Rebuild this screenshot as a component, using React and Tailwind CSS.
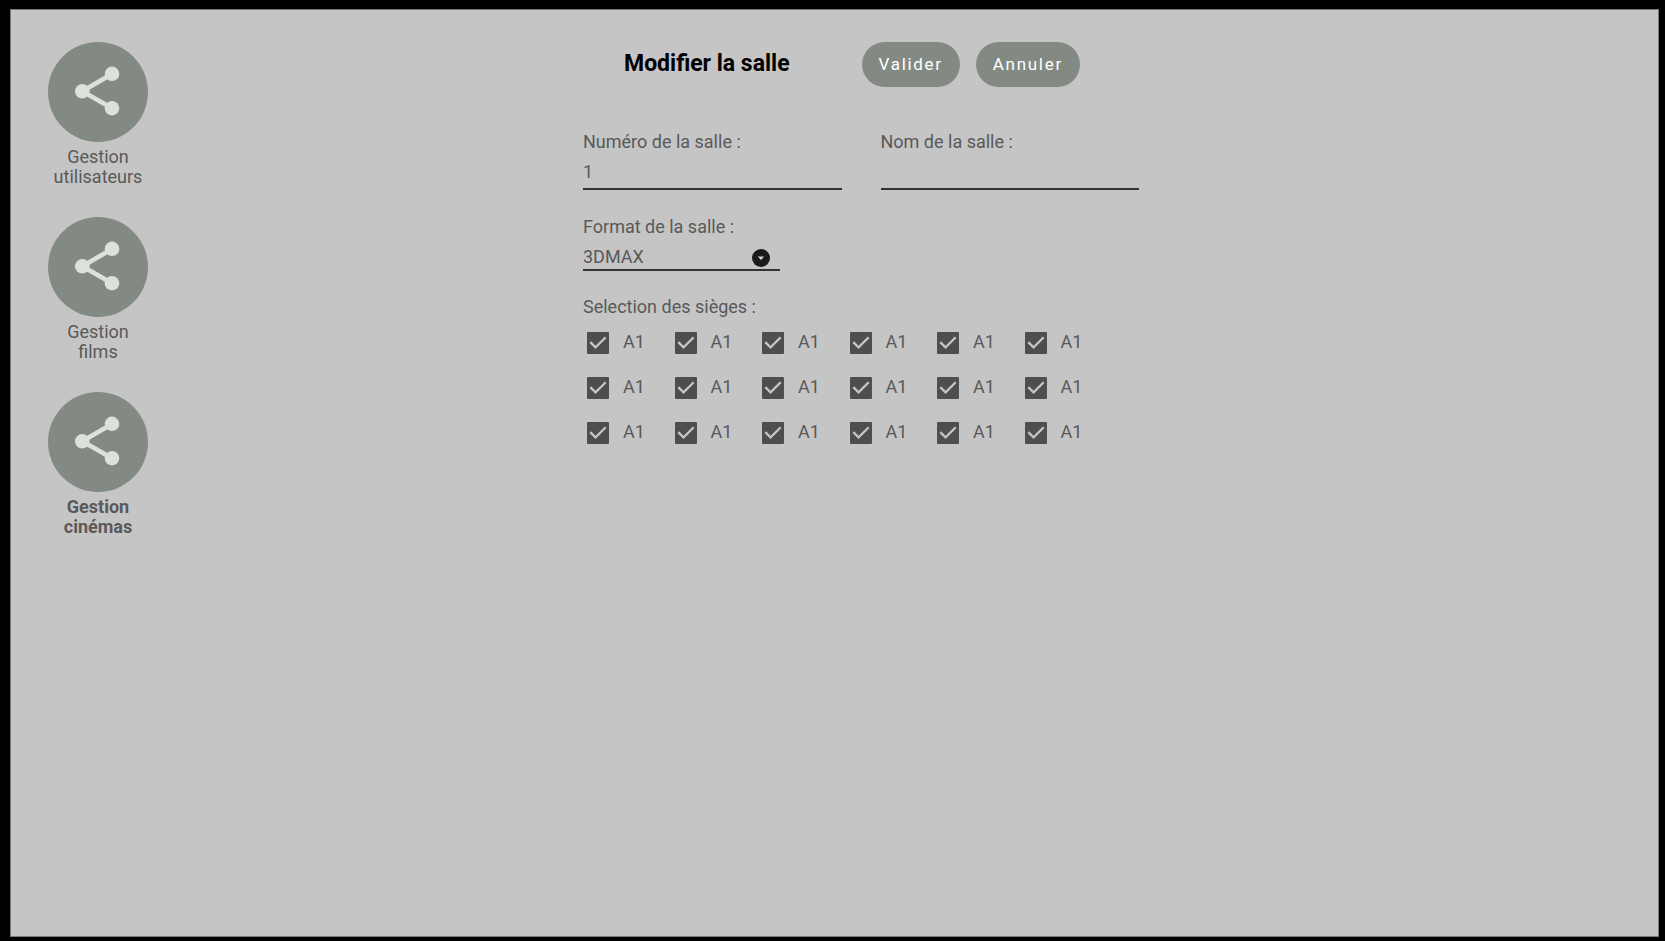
import { useState } from "react";

const sections = [
  { first: "Gestion", second: "utilisateurs", active: false },
  { first: "Gestion", second: "films", active: false },
  { first: "Gestion", second: "cinémas", active: true },
];

const seats = Array.from({ length: 18 }, (_, i) => ({ id: `seat-${i}`, label: "A1" }));

function ShareIcon() {
  return (
    <svg viewBox="0 0 100 100" className="size-full" aria-hidden="true">
      <path d="M64 32 34.3 49.3 64 66.2" fill="none" stroke="#dde1dd" strokeWidth="4.6" />
      <circle cx="34.3" cy="49.3" r="7.3" fill="#dde1dd" />
      <circle cx="64" cy="31.8" r="7.3" fill="#dde1dd" />
      <circle cx="64" cy="66.2" r="7.3" fill="#dde1dd" />
    </svg>
  );
}

function NavItem({ first, second, active }) {
  return (
    <a
      href="#"
      aria-current={active ? "page" : undefined}
      className={`flex flex-col items-center gap-[5px] text-center leading-5 ${active ? "font-bold" : ""}`}
    >
      <span className="size-[100px] rounded-full bg-[#838a83]">
        <ShareIcon />
      </span>
      <span>
        {first}
        <br />
        {second}
      </span>
    </a>
  );
}

function TextField({ id, label, defaultValue }) {
  return (
    <div className="flex flex-1 flex-col">
      <label htmlFor={id}>{label}</label>
      <input
        id={id}
        type="text"
        defaultValue={defaultValue}
        className="h-9 w-full border-b-2 border-[#333333] bg-transparent outline-none"
      />
    </div>
  );
}

function Seat({ id, label }) {
  const [checked, setChecked] = useState(true);
  return (
    <label htmlFor={id} className="flex items-start gap-3.5 pl-1 leading-5">
      <span className="grid size-[22px]">
        <input
          id={id}
          type="checkbox"
          checked={checked}
          onChange={(e) => setChecked(e.target.checked)}
          className="peer col-start-1 row-start-1 size-[22px] appearance-none rounded-[1px] border-2 border-[#4e4e4e] checked:bg-[#4e4e4e]"
        />
        <svg
          viewBox="3 3 18 18"
          aria-hidden="true"
          className="pointer-events-none invisible col-start-1 row-start-1 size-[22px] peer-checked:visible"
        >
          <path d="M10 17l-5-5 1.41-1.41L10 14.17l7.59-7.59L19 8z" fill="#c5c5c5" />
        </svg>
      </span>
      {label}
    </label>
  );
}

export default function App() {
  return (
    <div className="flex min-h-screen bg-black pt-[9px] pr-1.5 pb-1 pl-2.5 font-[Roboto,sans-serif] text-[18px] leading-6 text-[#595959]">
      <div className="flex flex-1 border border-[#7a7a7a] bg-[#c5c5c5] pt-8">
        <nav className="flex w-44 shrink-0 flex-col items-start gap-[30px] pl-[37px]">
          {sections.map((s) => (
            <NavItem key={s.second} {...s} />
          ))}
        </nav>
        <main className="flex flex-1 justify-center pr-[123px]">
          <form className="w-[556px]" onSubmit={(e) => e.preventDefault()}>
            <header className="flex items-center gap-4 pl-[41px]">
              <h1 className="mr-14 pb-0.5 text-[23px] font-bold text-black">Modifier la salle</h1>
              <button type="submit" className="h-[45px] rounded-full bg-[#838a83] px-[17px] pb-0.5 text-[17px] tracking-widest text-white">
                Valider
              </button>
              <button type="button" className="h-[45px] rounded-full bg-[#838a83] px-[17px] pb-0.5 text-[17px] tracking-widest text-white">
                Annuler
              </button>
            </header>

            <div className="mt-[43px] flex gap-[39px]">
              <TextField id="numero" label="Numéro de la salle :" defaultValue="1" />
              <TextField id="nom" label="Nom de la salle :" defaultValue="" />
            </div>

            <div className="mt-[25px] flex flex-col items-start">
              <label htmlFor="format">Format de la salle :</label>
              <div className="mt-2 grid h-6 w-[197px] items-start border-b-2 border-[#333333]">
                <select
                  id="format"
                  defaultValue="3DMAX"
                  className="col-start-1 row-start-1 h-5 w-full appearance-none bg-transparent leading-5 outline-none"
                >
                  <option>3DMAX</option>
                </select>
                <svg
                  viewBox="0 0 18 18"
                  aria-hidden="true"
                  className="pointer-events-none col-start-1 row-start-1 mr-2.5 size-[18px] self-center justify-self-end"
                >
                  <circle cx="9" cy="9" r="9" fill="#1a1a1c" />
                  <path d="M5.8 7.5h6.4L9 10.9z" fill="#d5d5d5" />
                </svg>
              </div>
            </div>

            <fieldset className="mt-6">
              <legend>Selection des sièges :</legend>
              <div className="mt-[13px] grid w-[525px] grid-cols-6 gap-y-[23px]">
                {seats.map((s) => (
                  <Seat key={s.id} {...s} />
                ))}
              </div>
            </fieldset>
          </form>
        </main>
      </div>
    </div>
  );
}
